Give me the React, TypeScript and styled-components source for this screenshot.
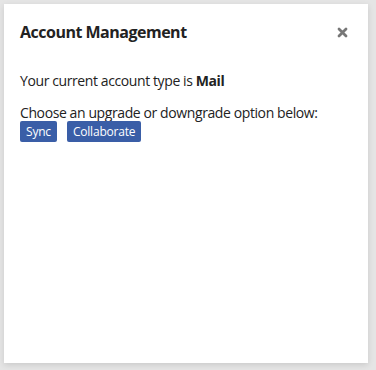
import React from 'react';
import styled, { createGlobalStyle } from 'styled-components';

const GlobalStyle = createGlobalStyle`
  html, body {
    margin: 0;
    padding: 0;
    background: #e5e5e5;
    width: 376px;
    height: 370px;
    overflow: hidden;
  }
  body {
    font-family: 'Open Sans', 'Noto Sans', sans-serif;
    color: #222;
  }
`;

const Page = styled.div`
  padding: 4px 8px 7px 4px;
  box-sizing: border-box;
  height: 370px;
  display: flex;
`;

const Dialog = styled.div`
  flex: 1;
  background: #fff;
  box-shadow: 0 2px 6px rgba(0, 0, 0, 0.12);
  padding: 16px 16px;
  box-sizing: border-box;
`;

const Header = styled.div`
  display: flex;
  align-items: center;
  justify-content: space-between;
  height: 24px;
  margin-bottom: 27px;
`;

const Title = styled.h3`
  margin: 0;
  font-size: 16px;
  font-weight: 700;
  color: #222;
  letter-spacing: -0.5px;
`;

const Close = styled.button`
  border: none;
  background: none;
  padding: 0;
  margin-right: 4px;
  width: 11px;
  height: 11px;
  display: flex;
  cursor: pointer;
`;

const Text = styled.p`
  margin: 0 0 12px;
  font-size: 14px;
  line-height: 20px;
  letter-spacing: -0.4px;
`;

const Options = styled.div`
  display: flex;
  gap: 10px;
  margin-top: -14px;
`;

const Option = styled.button`
  border: none;
  border-radius: 2px;
  background: #3a5ea7;
  color: #fff;
  font-family: 'Open Sans', 'Noto Sans', sans-serif;
  font-size: 12px;
  height: 21px;
  padding: 0 6px;
  letter-spacing: -0.2px;
  cursor: pointer;
`;

export default function App () {
  return (
    <>
      <GlobalStyle />
      <Page>
        <Dialog>
          <Header>
            <Title>Account Management</Title>
            <Close aria-label='Close'>
              <svg width='11' height='11' viewBox='0 0 11 11'>
                <path d='M2 2 L9 9 M9 2 L2 9' stroke='#777' strokeWidth='2.8' strokeLinecap='round' />
              </svg>
            </Close>
          </Header>
          <Text>Your current account type is <b>Mail</b></Text>
          <Text>Choose an upgrade or downgrade option below:</Text>
          <Options>
            <Option>Sync</Option>
            <Option>Collaborate</Option>
          </Options>
        </Dialog>
      </Page>
    </>
  );
}
